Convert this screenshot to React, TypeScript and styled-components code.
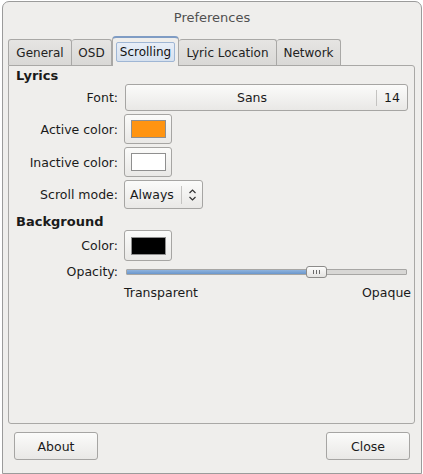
import React from "react";
import styled, { createGlobalStyle } from "styled-components";

const Global = createGlobalStyle`
  html, body { margin: 0; padding: 0; background: #ffffff; }
  body { font-family: "DejaVu Sans", "Liberation Sans", sans-serif; font-size: 12px; color: #1a1a1a; }
  * { box-sizing: border-box; }
`;

const Window = styled.div`
  margin: 1px 0 0 2px;
  width: 420px;
  height: 473px;
  border: 1px solid #9b9b9b;
  border-radius: 7px 7px 0 0;
  background: #efeeec;
  display: flex;
  flex-direction: column;
`;

const TitleBar = styled.div`
  height: 32px;
  display: flex;
  align-items: center;
  justify-content: center;
  font-size: 13px;
  color: #505050;
  padding-bottom: 2px;
`;

const TabRow = styled.div`
  display: flex;
  align-items: flex-end;
  padding-left: 5px;
  height: 30px;
  margin-top: 1px;
`;

const Tab = styled.div<{ $w: number }>`
  width: ${(p) => p.$w}px;
  height: 26px;
  border: 1px solid #a9a8a6;
  border-bottom: none;
  border-left: none;
  border-radius: 3px 3px 0 0;
  background: linear-gradient(#e6e5e3, #d9d8d6);
  display: flex;
  align-items: center;
  justify-content: center;
  padding-top: 1px;
  color: #222;
  &:first-child { border-left: 1px solid #a9a8a6; }
`;

const ActiveTab = styled.div<{ $w: number }>`
  width: ${(p) => p.$w}px;
  height: 30px;
  margin-bottom: -1px;
  border: 1px solid #a9a8a6;
  border-top: 2px solid #7f9cc4;
  border-bottom: none;
  border-radius: 4px 4px 0 0;
  background: #efeeec;
  display: flex;
  justify-content: center;
  padding-top: 4px;
  position: relative;
  z-index: 1;
`;

const ActiveLabel = styled.div`
  height: 20px;
  padding: 0 3px;
  border: 1px solid #9fb6d4;
  border-radius: 2px;
  background: linear-gradient(#e8eef7, #d6e1ef);
  display: flex;
  align-items: center;
  color: #111;
`;

const Panel = styled.div`
  margin: 0 6px 0 5px;
  height: 359px;
  border: 1px solid #a9a8a6;
  border-radius: 0 3px 3px 3px;
  padding: 0 7px 0 7px;
`;

const Heading = styled.div`
  font-weight: bold;
  font-size: 13px;
  height: 18px;
  display: flex;
  align-items: center;
`;

const Form = styled.div`
  display: grid;
  grid-template-columns: 102px 1fr;
  column-gap: 6px;
  row-gap: 3px;
  align-items: center;
`;

const Label = styled.div`
  text-align: right;
  font-size: 12.5px;
`;

const Button = styled.div<{ $h: number }>`
  height: ${(p) => p.$h}px;
  border: 1px solid #a6a5a3;
  border-radius: 3px;
  background: linear-gradient(#fbfbfa, #e9e8e6);
  display: flex;
  align-items: center;
`;

const FontButton = styled(Button)`
  width: 283px;
  margin-left: 1px;
  font-size: 12.5px;
`;

const FontName = styled.div`
  flex: 1;
  text-align: center;
  padding-left: 2px;
`;

const FontSep = styled.div`
  width: 1px;
  height: 16px;
  background: #c4c3c1;
`;

const FontSize = styled.div`
  width: 30px;
  text-align: center;
`;

const ColorButton = styled(Button)`
  width: 48px;
  justify-content: center;
`;

const Swatch = styled.div<{ $c: string }>`
  width: 35px;
  height: 18px;
  border: 1px solid #8f8f8f;
  background: ${(p) => p.$c};
`;

const Combo = styled(Button)`
  width: 79px;
  padding-left: 5px;
  font-size: 12.5px;
`;

const ComboText = styled.div`
  flex: 1;
`;

const ComboSep = styled.div`
  width: 1px;
  height: 18px;
  background: #c4c3c1;
`;

const ComboArrow = styled.div`
  width: 20px;
  display: flex;
  justify-content: center;
`;

const Section = styled.div`
  margin-top: 3px;
`;

const SliderTrack = styled.div`
  position: relative;
  width: 281px;
  height: 12px;
  margin-left: 2px;
  display: flex;
  align-items: center;
`;

const Groove = styled.div`
  width: 100%;
  height: 6px;
  border: 1px solid #a7a6a4;
  border-radius: 1px;
  background: #d8d7d5;
  overflow: hidden;
`;

const Fill = styled.div`
  height: 100%;
  background: linear-gradient(#8fb3de, #6b97cc);
  border-right: 1px solid #5a83b6;
`;

const Handle = styled.div`
  position: absolute;
  top: 0;
  width: 21px;
  height: 12px;
  margin-left: -10px;
  border: 1px solid #8c8b89;
  border-radius: 3px;
  background: linear-gradient(#fdfdfc, #e4e3e1);
  display: flex;
  align-items: center;
  justify-content: center;
  gap: 2px;
`;

const Grip = styled.div`
  width: 1px;
  height: 4px;
  background: #6a6a6a;
`;

const RangeLabels = styled.div`
  grid-column: 2;
  display: flex;
  justify-content: space-between;
  width: 287px;
  padding-top: 3px;
  font-size: 12.5px;
`;

const Footer = styled.div`
  display: flex;
  justify-content: space-between;
  padding: 8px 11px 0 11px;
`;

const DialogButton = styled(Button)`
  width: 84px;
  justify-content: center;
  font-size: 12.5px;
`;

const UpDown = () => (
  <svg width="9" height="14" viewBox="0 0 9 14" fill="none" stroke="#333" strokeWidth="1.2">
    <path d="M1.5 5 L4.5 2 L7.5 5" />
    <path d="M1.5 9 L4.5 12 L7.5 9" />
  </svg>
);

export default function App() {
  const opacity = 0.675;
  return (
    <>
      <Global />
      <Window>
        <TitleBar>Preferences</TitleBar>
        <TabRow>
          <Tab $w={64}>General</Tab>
          <Tab $w={40}>OSD</Tab>
          <ActiveTab $w={67}>
            <ActiveLabel>Scrolling</ActiveLabel>
          </ActiveTab>
          <Tab $w={98}>Lyric Location</Tab>
          <Tab $w={64}>Network</Tab>
        </TabRow>
        <Panel>
          <Heading>Lyrics</Heading>
          <Form>
            <Label>Font:</Label>
            <FontButton $h={27}>
              <FontName>Sans</FontName>
              <FontSep />
              <FontSize>14</FontSize>
            </FontButton>
            <Label>Active color:</Label>
            <ColorButton $h={30}>
              <Swatch $c="#ff9411" />
            </ColorButton>
            <Label>Inactive color:</Label>
            <ColorButton $h={30}>
              <Swatch $c="#ffffff" />
            </ColorButton>
            <Label>Scroll mode:</Label>
            <Combo $h={29}>
              <ComboText>Always</ComboText>
              <ComboSep />
              <ComboArrow>
                <UpDown />
              </ComboArrow>
            </Combo>
          </Form>
          <Section>
            <Heading>Background</Heading>
          </Section>
          <Form>
            <Label>Color:</Label>
            <ColorButton $h={31}>
              <Swatch $c="#000000" />
            </ColorButton>
            <Label>Opacity:</Label>
            <SliderTrack>
              <Groove>
                <Fill style={{ width: `${opacity * 100}%` }} />
              </Groove>
              <Handle style={{ left: `${opacity * 100}%` }}>
                <Grip />
                <Grip />
                <Grip />
              </Handle>
            </SliderTrack>
            <RangeLabels>
              <span>Transparent</span>
              <span>Opaque</span>
            </RangeLabels>
          </Form>
        </Panel>
        <Footer>
          <DialogButton $h={28}>About</DialogButton>
          <DialogButton $h={28}>Close</DialogButton>
        </Footer>
      </Window>
    </>
  );
}
